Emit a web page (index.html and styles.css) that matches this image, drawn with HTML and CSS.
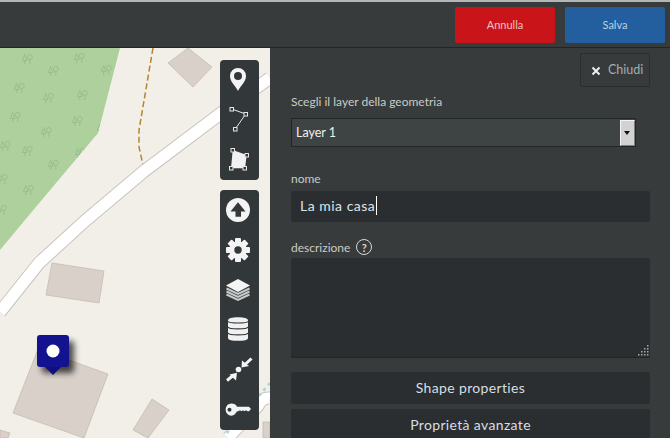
FILE: index.html
```html
<!DOCTYPE html>
<html lang="it">
<head>
<meta charset="utf-8">
<title>Mappa</title>
<link rel="stylesheet" href="styles.css">
</head>
<body>
<header class="topbar">
  <button class="action action-cancel">Annulla</button>
  <button class="action action-save">Salva</button>
</header>
<main class="main">
  <section class="map">
    <svg class="map-canvas" viewBox="0 0 270 390" width="270" height="390" aria-hidden="true">
      <defs>
        <g id="tree" fill="none" stroke="#95bd89" stroke-width=".9">
          <path d="M2.700 10V6.500M2.700 .5 .4 6.500H5z"/>
          <circle cx="7.800" cy="3" r="2.500"/>
          <path d="M7.800 5.500V10"/>
        </g>
        <clipPath id="forest"><polygon points="0,0 120,0 98,85 25,172 0,202"/></clipPath>
        <filter id="soft" x="-50%" y="-50%" width="200%" height="200%"><feGaussianBlur stdDeviation="3"/></filter>
      </defs>
      <rect width="270" height="390" fill="#f2efe9"/>
      <polygon points="0,0 120,0 98,85 25,172 0,202" fill="#aed09c"/>
      <g clip-path="url(#forest)">
        <use href="#tree" x="22" y="6"/><use href="#tree" x="74" y="5"/><use href="#tree" x="48" y="18"/><use href="#tree" x="101" y="17"/>
        <use href="#tree" x="14" y="35"/><use href="#tree" x="77" y="42"/><use href="#tree" x="43" y="45"/><use href="#tree" x="10" y="64"/>
        <use href="#tree" x="72" y="68"/><use href="#tree" x="41" y="79"/><use href="#tree" x="0" y="93"/><use href="#tree" x="22" y="98"/>
        <use href="#tree" x="75" y="100"/><use href="#tree" x="48" y="112"/><use href="#tree" x="-3" y="126"/><use href="#tree" x="23" y="137"/>
        <use href="#tree" x="-4" y="157"/><use href="#tree" x="97" y="76"/>
      </g>
      <path d="M153 0 145 47 139 82V99L143 117" fill="none" stroke="#b5862c" stroke-width="1.500" stroke-dasharray="6 3"/>
      <polygon points="168,15 188,0 212,19 193,39" fill="#d9d0c9" stroke="#c4b6ab" stroke-width=".7"/>
      <path d="M270 30 220 66 143 124 86 172 39 215 0 264" fill="none" stroke="#c8c4bd" stroke-width="13.500"/>
      <path d="M270 30 220 66 143 124 86 172 39 215 0 264" fill="none" stroke="#fff" stroke-width="11.500"/>
      <polygon points="52,215 104,223 99,255 46,247" fill="#d9d0c9" stroke="#c4b6ab" stroke-width=".7"/>
      <polygon points="38,301 108,326 84,390 13,365" fill="#d9d0c9" stroke="#c4b6ab" stroke-width=".7"/>
      <polygon points="152,351 169,362 148,390 133,382" fill="#d9d0c9" stroke="#c4b6ab" stroke-width=".7"/>
      <polygon points="0,382 10,385 8,390 0,390" fill="#d9d0c9" stroke="#c4b6ab" stroke-width=".7"/>
      <polygon points="263,374 270,374 270,390 263,390" fill="#d9d0c9" stroke="#c4b6ab" stroke-width=".7"/>
      <path d="M270 350Q262 349 258 358L228 390" fill="none" stroke="#c8c4bd" stroke-width="13"/>
      <path d="M270 350Q262 349 258 358L228 390" fill="none" stroke="#fff" stroke-width="11"/>
      <path d="M270 335 226 386" fill="none" stroke="#a9d3d9" stroke-width="2.500" stroke-dasharray="3 4"/>
    </svg>
    <div class="marker">
      <svg viewBox="0 0 48 48" width="48" height="48" aria-hidden="true">
        <rect x="5" y="6" width="32" height="32" rx="3" fill="#000" opacity=".7" filter="url(#soft)"/>
        <path d="M8 32h16l-8 8z" fill="#0f0f7f"/>
        <rect x="0" y="0" width="32" height="32" rx="3" fill="#13138f"/>
        <circle cx="16" cy="16" r="6.500" fill="#fff"/>
      </svg>
    </div>
    <div class="tools">
      <div class="toolbar">
        <button class="tool" aria-label="Punto">
          <svg viewBox="0 0 40 40" width="40" height="40"><path fill-rule="evenodd" fill="#f4f4f4" d="M20 31c-2-4.500-8-9-8-15a8 8 0 0 1 16 0c0 6-6 10.500-8 15zM20 12a4 4 0 1 0 0 8 4 4 0 0 0 0-8z"/></svg>
        </button>
        <button class="tool" aria-label="Linea">
          <svg viewBox="0 0 40 40" width="40" height="40"><path d="M13.700 9 27.700 14 17.300 29" fill="none" stroke="#e6e6e6"/><g fill="#333839" stroke="#e6e6e6"><rect x="12" y="7.500" width="3.500" height="3.500"/><rect x="26" y="12.500" width="3.500" height="3.500"/><rect x="15.500" y="27.500" width="3.500" height="3.500"/></g></svg>
        </button>
        <button class="tool" aria-label="Poligono">
          <svg viewBox="0 0 40 40" width="40" height="40"><path d="M14.700 10 28.700 15 27 28.300 13 28.300z" fill="#f1f1f1"/><g fill="#333839" stroke="#e6e6e6"><rect x="13" y="8.500" width="3.500" height="3.500"/><rect x="27" y="13.500" width="3.500" height="3.500"/><rect x="25" y="26.500" width="3.500" height="3.500"/><rect x="11.500" y="26.500" width="3.500" height="3.500"/></g></svg>
        </button>
      </div>
      <div class="toolbar">
        <button class="tool" aria-label="Carica">
          <svg viewBox="0 0 40 40" width="40" height="40"><circle cx="20" cy="20" r="12" fill="#f4f4f4"/><path d="M20 12.300 27.500 21.500H23V26.700H17.500V21.500H12.500z" fill="#333839"/></svg>
        </button>
        <button class="tool" aria-label="Impostazioni">
          <svg viewBox="0 0 40 40" width="40" height="40"><g fill="#f4f4f4"><circle cx="20" cy="20" r="8.800"/><rect x="17" y="8" width="6" height="24" rx="1"/><rect x="17" y="8" width="6" height="24" rx="1" transform="rotate(45 20 20)"/><rect x="17" y="8" width="6" height="24" rx="1" transform="rotate(90 20 20)"/><rect x="17" y="8" width="6" height="24" rx="1" transform="rotate(135 20 20)"/></g><circle cx="20" cy="20" r="3.700" fill="#333839"/></svg>
        </button>
        <button class="tool" aria-label="Livelli">
          <svg viewBox="0 0 40 40" width="40" height="40"><g fill="none" stroke="#c9cbcb" stroke-width="2"><path d="M8.500 24.500 20 30 31.500 24.500"/><path d="M8.500 21.500 20 27 31.500 21.500"/><path d="M8.500 18.500 20 24 31.500 18.500"/></g><path d="M20 9 32 15.500 20 22 8 15.500z" fill="#f4f4f4"/></svg>
        </button>
        <button class="tool" aria-label="Database">
          <svg viewBox="0 0 40 40" width="40" height="40"><path d="M10 10.500C10 8.500 14 7.300 20 7.300S30 8.500 30 10.500V28C30 30 26 30.800 20 30.800S10 30 10 28z" fill="#f0f0f0"/><g fill="none" stroke="#333839" stroke-width="1.200"><path d="M10 11.500C11 13.500 29 13.500 30 11.500"/><path d="M10 17C11 19.500 29 19.500 30 17"/><path d="M10 23C11 25.500 29 25.500 30 23"/></g></svg>
        </button>
        <button class="tool" aria-label="Unisci">
          <svg viewBox="0 0 40 40" width="40" height="40"><circle cx="20.500" cy="19.500" r="2.800" fill="#f4f4f4"/><path d="M33.500 8.500 27 14.500" stroke="#f4f4f4" stroke-width="3"/><path d="M24 10.500 31 16 23.500 17.500z" fill="#f4f4f4"/><path d="M9 30.500 14.500 26" stroke="#f4f4f4" stroke-width="3"/><path d="M19 22.700 11.500 24.500 18 30.500z" fill="#f4f4f4"/></svg>
        </button>
        <button class="tool" aria-label="Chiave">
          <svg viewBox="0 0 40 40" width="40" height="40"><path fill-rule="evenodd" fill="#f4f4f4" d="M13.500 13.400C16 13.400 18 14.500 19 16.700H31L33 19 31 21.300H29.500L28 20.300 26.500 21.300 25 20.300 23.500 21.300 22 20.300 20.500 21.300H19C18 23.500 16 25.700 13.500 25.700 10 25.700 7.700 23 7.700 19.600S10 13.400 13.500 13.400zM11.500 17.700A2 2 0 1 0 11.500 21.700 2 2 0 0 0 11.500 17.700z"/></svg>
        </button>
      </div>
    </div>
  </section>
  <aside class="panel">
    <div class="panel-head">
      <button class="close"><svg class="close-icon" viewBox="0 0 10 10" width="10" height="10"><path d="M1.500 1.500 8.500 8.500M8.500 1.500 1.500 8.500" stroke="#eee" stroke-width="2"/></svg>Chiudi</button>
    </div>
    <form class="form">
      <label class="label">Scegli il layer della geometria</label>
      <div class="select">
        <span class="select-value">Layer 1</span>
        <span class="select-arrow"></span>
      </div>
      <label class="label label-name">nome</label>
      <div class="input"><span>La mia casa</span><span class="caret"></span></div>
      <label class="label label-desc">descrizione <span class="help">?</span></label>
      <div class="textarea"><svg class="grip" viewBox="0 0 11 11" width="11" height="11"><g fill="#a5a9aa"><rect x="9" y="0" width="1.500" height="1.500"/><rect x="6" y="3" width="1.500" height="1.500"/><rect x="9" y="3" width="1.500" height="1.500"/><rect x="3" y="6" width="1.500" height="1.500"/><rect x="6" y="6" width="1.500" height="1.500"/><rect x="9" y="6" width="1.500" height="1.500"/><rect x="0" y="9" width="1.500" height="1.500"/><rect x="3" y="9" width="1.500" height="1.500"/><rect x="6" y="9" width="1.500" height="1.500"/><rect x="9" y="9" width="1.500" height="1.500"/></g></svg></div>
      <button type="button" class="wide">Shape properties</button>
      <button type="button" class="wide">Proprietà avanzate</button>
    </form>
  </aside>
</main>
</body>
</html>
```
FILE: styles.css
```css
* { box-sizing: border-box; }
html, body { margin: 0; height: 100%; overflow: hidden; }
body {
  font-family: "Lato", "Open Sans", sans-serif;
  font-size: 12px;
  color: #c9ccc6;
  background: #373b3c;
}
button { font-family: inherit; padding: 0; }
.topbar {
  height: 48px;
  padding: 5px 5px 0 0;
  display: flex;
  justify-content: flex-end;
  gap: 10px;
  background: #373b3c;
  border-top: 2px solid #b4b6b6;
  border-bottom: 1px solid #222526;
}
.action {
  width: 100px;
  height: 36px;
  padding-bottom: 2px;
  border: 0;
  border-radius: 2px;
  font-size: 11px;
}
.action-cancel { background: #c9141a; color: #ecc4c4; }
.action-save { background: #235f9f; color: #b9d2e8; }
.main { display: flex; height: 390px; }
.map { position: relative; width: 270px; flex: none; overflow: hidden; }
.map-canvas { display: block; }
.marker { position: absolute; left: 37px; top: 287px; width: 48px; height: 48px; }
.marker svg { display: block; overflow: visible; }
.tools {
  position: absolute;
  left: 220px;
  top: 12px;
  display: flex;
  flex-direction: column;
  gap: 10px;
}
.toolbar {
  width: 39px;
  background: #323839;
  border-radius: 4px;
  display: flex;
  flex-direction: column;
}
.tool {
  width: 39px;
  height: 40px;
  border: 0;
  background: none;
  overflow: hidden;
}
.tool svg { display: block; margin-left: -2px; }
.panel { flex: 1; min-width: 0; padding: 5px 20px 0 21px; }
.panel-head { display: flex; justify-content: flex-end; }
.close {
  width: 70px;
  height: 34px;
  padding: 0 0 2px 10px;
  display: flex;
  align-items: center;
  gap: 7px;
  background: none;
  border: 1px solid #2a2e2f;
  border-radius: 2px;
  color: #a3adb0;
  font-size: 12.5px;
}
.close-icon { margin-top: 4px; }
.form { display: flex; flex-direction: column; padding-top: 7px; }
.label { display: block; line-height: 15px; height: 15px; }
.select {
  margin-top: 9px;
  width: 345px;
  height: 29px;
  display: flex;
  align-items: center;
  justify-content: space-between;
  background: #3e4444;
  border: 1px solid #222526;
  color: #eef0ee;
  padding-left: 4px;
  font-size: 12.5px;
}
.select-arrow {
  position: relative;
  width: 15px;
  height: 26px;
  background: #d2d2d2;
  border-top: 1px solid #f4f4f4;
  border-left: 1px solid #f4f4f4;
  border-right: 1px solid #808080;
  border-bottom: 1px solid #808080;
}
.select-arrow::after {
  content: "";
  position: absolute;
  left: 3px;
  top: 10px;
  border: 3.500px solid transparent;
  border-top: 4px solid #111;
  border-bottom: 0;
}
.label-name { margin-top: 24px; }
.input {
  margin-top: 5px;
  height: 31px;
  display: flex;
  align-items: center;
  padding: 0 0 3px 9px;
  background: #2a2e30;
  border-radius: 2px;
  color: #dfe5e6;
  font-size: 14px;
  letter-spacing: .5px;
}
.caret { width: 1px; height: 19px; background: #fff; margin-left: 1px; }
.label-desc { margin-top: 17px; display: flex; align-items: center; gap: 6px; height: 16px; }
.help {
  width: 16px;
  height: 16px;
  border: 1.500px solid #d6d8d8;
  border-radius: 50%;
  display: flex;
  align-items: center;
  justify-content: center;
  color: #d6d8d8;
  font-size: 11px;
  font-weight: 700;
}
.textarea {
  margin-top: 3px;
  height: 100px;
  position: relative;
  background: #2a2e30;
  border-bottom: 1px solid #222526;
  border-radius: 2px;
}
.grip { position: absolute; right: 1px; bottom: 1px; }
.wide {
  height: 32px;
  margin-top: 5px;
  padding-bottom: 2px;
  border: 0;
  border-radius: 2px;
  background: #2a2e30;
  color: #d5dfe4;
  font-size: 14px;
  letter-spacing: .35px;
  flex: none;
}
.textarea + .wide { margin-top: 14px; }
```
